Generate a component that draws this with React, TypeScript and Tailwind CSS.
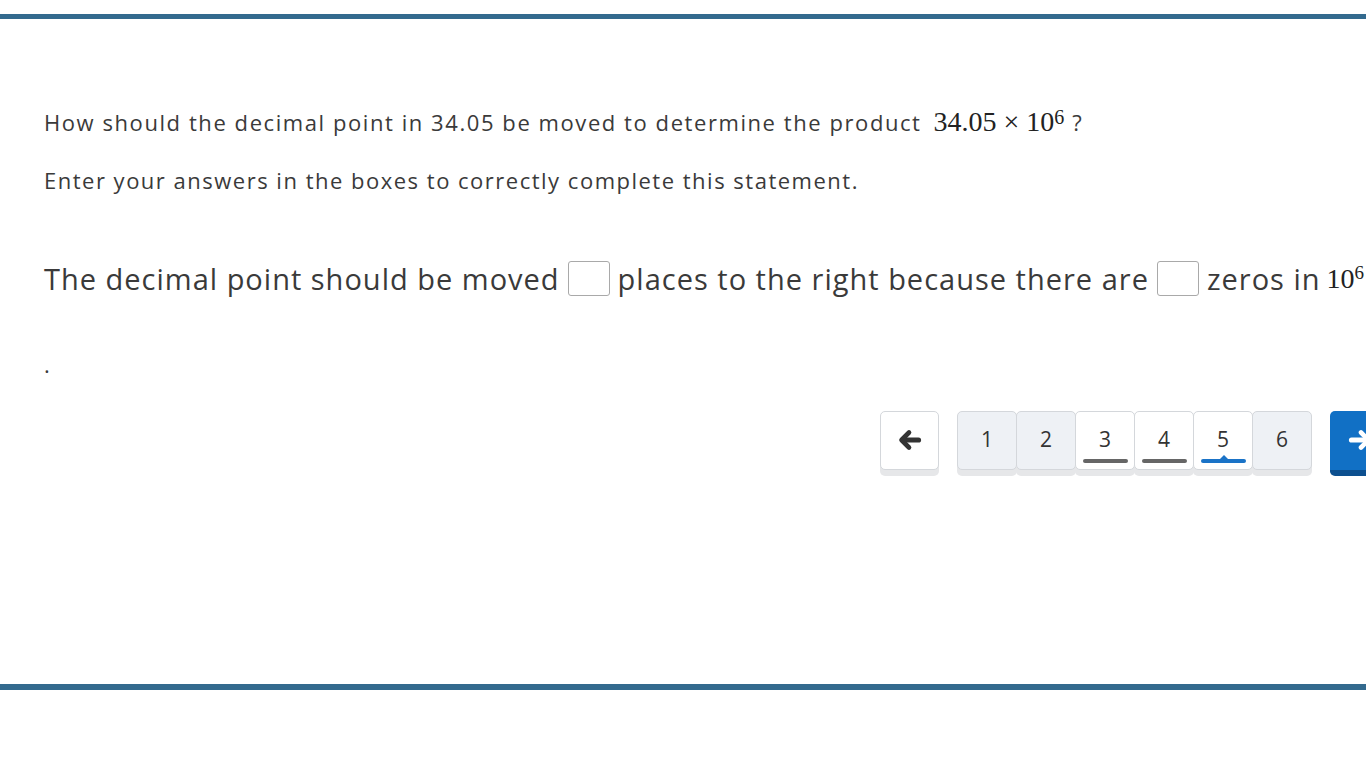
const pages = [
  { n: 1, state: 'empty' },
  { n: 2, state: 'empty' },
  { n: 3, state: 'done' },
  { n: 4, state: 'done' },
  { n: 5, state: 'current' },
  { n: 6, state: 'empty' },
];

function Blank() {
  return (
    <span className="mx-2 inline-block h-[35px] w-[42px] shrink-0 rounded-[3px] border border-[#a9a9a9] bg-white align-middle" />
  );
}

function Arrow({ flip, color }: { flip?: boolean; color: string }) {
  return (
    <svg
      width="24"
      height="24"
      viewBox="0 0 24 24"
      fill="none"
      stroke={color}
      strokeLinecap="round"
      strokeLinejoin="round"
      style={flip ? { transform: 'scaleX(-1)' } : undefined}
    >
      <path d="M11 4.5 L3.5 12 L11 19.5" strokeWidth="4.6" />
      <path d="M5 12 H20.5" strokeWidth="5.2" />
    </svg>
  );
}

export default function App() {
  return (
    <div
      className="relative h-[768px] w-[1366px] overflow-hidden bg-white text-[#3a3a3a]"
      style={{ fontFamily: '"Open Sans", sans-serif' }}
    >
      <div className="mt-[14px] h-[5px] w-full bg-[#336a8e]" />

      <div className="px-[44px] pt-[86px]">
        <p className="flex h-[34px] items-center whitespace-nowrap text-[22px] tracking-[1.57px]">
          How should the decimal point in 34.05 be moved to determine the product
          <span
            className="ml-3 text-[28px] tracking-normal text-[#222]"
            style={{ fontFamily: '"Liberation Serif", serif' }}
          >
            34.05 × 10<sup className="relative -top-[7px] text-[20px]">6</sup>
          </span>
          <span className="ml-2">?</span>
        </p>

        <p className="mt-[25px] whitespace-nowrap text-[22px] tracking-[1.5px]">
          Enter your answers in the boxes to correctly complete this statement.
        </p>

        <p className="mt-[60px] flex items-center whitespace-nowrap text-[29px] tracking-[1px]">
          The decimal point should be moved
          <Blank />
          places to the right because there are
          <Blank />
          zeros in
          <span
            className="ml-[6px] text-[28px] tracking-normal text-[#222]"
            style={{ fontFamily: '"Liberation Serif", serif' }}
          >
            10<sup className="relative -top-[9px] text-[19px]">6</sup>
          </span>
        </p>

        <p className="mt-[52px] text-[22px] leading-none">.</p>
      </div>

      <div className="mt-[36px] flex items-start pl-[880px]">
        <button className="flex h-[59px] w-[59px] shrink-0 items-center justify-center rounded-[5px] border border-[#d4d7db] bg-white shadow-[0_6px_0_#e6e7e9]">
          <Arrow color="#333" />
        </button>

        <div className="ml-[18px] flex shrink-0">
          {pages.map((p) => (
            <button
              key={p.n}
              className={
                'relative -mr-px flex h-[59px] w-[60px] shrink-0 items-center justify-center rounded-[5px] border border-[#d4d7db] text-[21px] tracking-normal text-[#333] shadow-[0_6px_0_#e6e7e9] ' +
                (p.state === 'empty' ? 'bg-[#eef1f5]' : 'bg-white')
              }
            >
              {p.n}
              {p.state === 'done' && (
                <span className="absolute bottom-[6px] left-[7px] h-[4px] w-[45px] rounded-full bg-[#666]" />
              )}
              {p.state === 'current' && (
                <>
                  <span className="absolute bottom-[6px] left-[7px] h-[4px] w-[45px] rounded-full bg-[#1a73c7]" />
                  <span className="absolute bottom-[9px] left-[25px] h-0 w-0 border-x-[5px] border-b-[5px] border-x-transparent border-b-[#1a73c7]" />
                </>
              )}
            </button>
          ))}
        </div>

        <button className="ml-[19px] flex h-[65px] w-[60px] shrink-0 items-center justify-center rounded-[5px] border-b-[6px] border-[#0c4f8f] bg-[#1170c5]">
          <Arrow flip color="#fff" />
        </button>
      </div>

      <div className="absolute left-0 top-[684px] h-[6px] w-full bg-[#336a8e]" />
    </div>
  );
}
